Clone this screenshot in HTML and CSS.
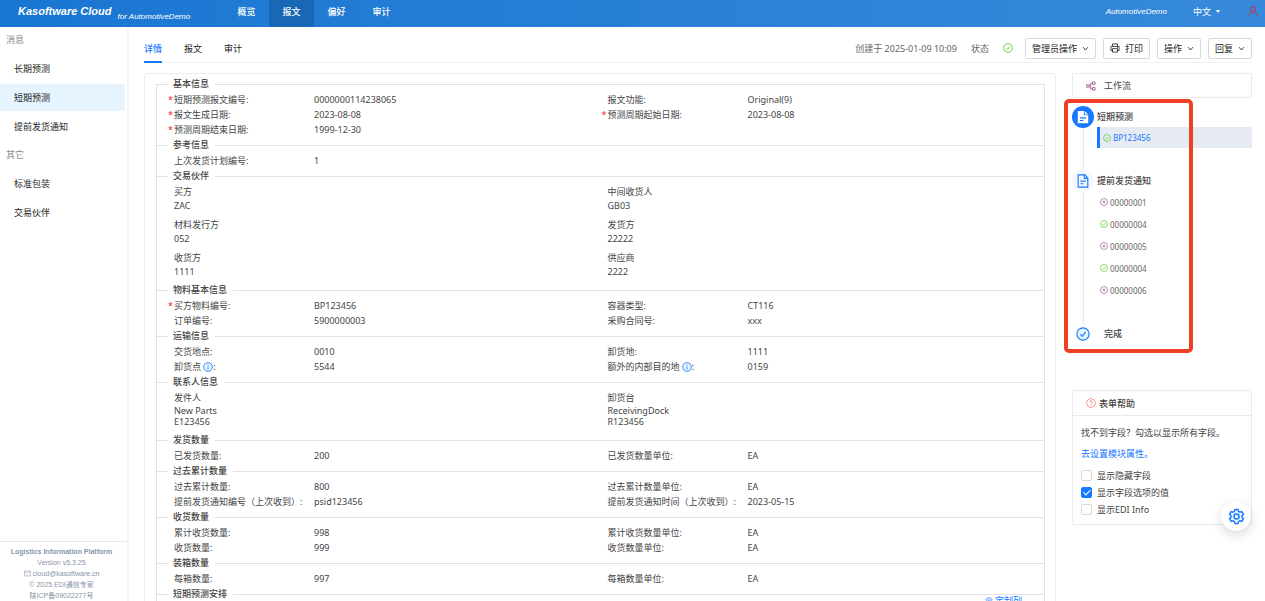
FILE: index.html
```html
<!DOCTYPE html>
<html lang="zh-CN">
<head>
    <meta charset="UTF-8">
    <meta name="viewport" content="width=device-width, initial-scale=1.0">
    <title>Kasoftware Cloud</title>
    <link rel="stylesheet" href="styles.css">
</head>
<body>
    <!-- Icons -->
    <svg class="sprite" aria-hidden="true">
        <symbol id="i-check" viewBox="0 0 16 16"><circle cx="8" cy="8" r="7"/><path d="M5 8.2l2.2 2.4L11 5.6"/></symbol>
        <symbol id="i-plus" viewBox="0 0 16 16"><circle cx="8" cy="8" r="7"/><path d="M5 8h6M8 5v6"/></symbol>
        <symbol id="i-info" viewBox="0 0 16 16"><circle cx="8" cy="8" r="7"/><path d="M8 7v5M8 4v1.5"/></symbol>
        <symbol id="i-question" viewBox="0 0 16 16"><circle cx="8" cy="8" r="7"/><path d="M5.800 6.500c0-3 4.400-3 4.400 0C10.200 8 8 8 8 9.800M8 11.200v1.200"/></symbol>
        <symbol id="i-down" viewBox="0 0 16 16"><path d="M2.500 5L8 11.500 13.500 5"/></symbol>
        <symbol id="i-print" viewBox="0 0 16 16"><path d="M4 5.500V1.500h8v4M4 12H1.500V5.500h13V12H12M4 9h8v5.500H4zM11.500 7.300h1.200"/></symbol>
        <symbol id="i-user" viewBox="0 0 16 16"><circle cx="8" cy="5" r="4"/><path d="M1.500 15.500C2 7 14 7 14.500 15.500"/></symbol>
        <symbol id="i-mail" viewBox="0 0 16 16"><path d="M1 2.500h14v11H1zM1.500 3L8 8.500 14.500 3"/></symbol>
        <symbol id="i-share" viewBox="0 0 16 16"><path d="M1 6h4v4H1zM10.500 1.500h4v4h-4zM10.500 10.500h4v4h-4zM5 8h2.500M10.500 3.500h-3v9h3"/></symbol>
        <symbol id="i-file" viewBox="0 0 16 16"><path d="M2.500 1h7.500l3.500 3.500V15h-11zM9.500 1v4h4M5 8.200h6M5 11.200h3.500"/></symbol>
        <symbol id="i-file-fill" viewBox="0 0 16 16"><path class="solid" d="M2 1h7v5h5v9H2z"/><path class="solid" d="M10 1l4 4h-4z"/><path class="cut" d="M4.500 9h7M4.500 12h4"/></symbol>
        <symbol id="i-gear" viewBox="-12 -12 24 24"><path d="M-2.200-10h4.400l.7 2.700 1.970 1.140 2.690-.75 2.200 3.820-1.990 1.950v2.280l1.990 1.950-2.200 3.820-2.690-.75L2.900 7.300 2.200 10h-4.400l-.7-2.700-1.970-1.140-2.690.75-2.200-3.820 1.990-1.950v-2.280l-1.990-1.950 2.200-3.820 2.690.75L-2.900-7.300z"/><circle r="3.600"/></symbol>
    </svg>

    <header class="topbar">
        <div class="brand">Kasoftware Cloud <small>for AutomotiveDemo</small></div>
        <nav class="topnav">
            <a href="#">概览</a>
            <a href="#" class="active">报文</a>
            <a href="#">偏好</a>
            <a href="#">审计</a>
        </nav>
        <div class="account">
            <span class="tenant">AutomotiveDemo</span>
            <button class="lang">中文 <span class="caret"></span></button>
            <button class="user" aria-label="用户"><svg class="icon"><use href="#i-user"/></svg></button>
        </div>
    </header>

    <div class="layout">
        <aside class="sidebar">
            <nav class="menu">
                <div class="menu-title">消息</div>
                <a href="#">长期预测</a>
                <a href="#" class="active">短期预测</a>
                <a href="#">提前发货通知</a>
                <div class="menu-title">其它</div>
                <a href="#">标准包装</a>
                <a href="#">交易伙伴</a>
            </nav>
            <footer class="about">
                <strong>Logistics Information Platform</strong>
                <div>Version v5.3.25</div>
                <div><svg class="icon"><use href="#i-mail"/></svg> cloud@kasoftware.cn</div>
                <div>© 2025 EDI通信专家</div>
                <div>陕ICP备09022277号</div>
            </footer>
        </aside>

        <main class="main">
            <div class="toolbar">
                <nav class="tabs">
                    <a href="#" class="active">详情</a>
                    <a href="#">报文</a>
                    <a href="#">审计</a>
                </nav>
                <div class="meta">
                    <span>创建于 2025-01-09 10:09</span>
                    <span>状态</span>
                    <svg class="icon ok"><use href="#i-check"/></svg>
                </div>
                <div class="actions">
                    <button>管理员操作 <svg class="icon small"><use href="#i-down"/></svg></button>
                    <button><svg class="icon"><use href="#i-print"/></svg> 打印</button>
                    <button>操作 <svg class="icon small"><use href="#i-down"/></svg></button>
                    <button>回复 <svg class="icon small"><use href="#i-down"/></svg></button>
                </div>
            </div>

            <div class="content">
                <div class="detail">
                    <fieldset>
                        <legend>基本信息</legend>
                        <div class="fields">
                            <div class="field required"><span class="label">短期预测报文编号:</span><span>0000000114238065</span></div>
                            <div class="field"><span class="label">报文功能:</span><span>Original(9)</span></div>
                            <div class="field required"><span class="label">报文生成日期:</span><span>2023-08-08</span></div>
                            <div class="field required"><span class="label">预测周期起始日期:</span><span>2023-08-08</span></div>
                            <div class="field required"><span class="label">预测周期结束日期:</span><span>1999-12-30</span></div>
                        </div>
                    </fieldset>
                    <fieldset>
                        <legend>参考信息</legend>
                        <div class="fields">
                            <div class="field"><span class="label">上次发货计划编号:</span><span>1</span></div>
                        </div>
                    </fieldset>
                    <fieldset>
                        <legend>交易伙伴</legend>
                        <div class="fields partners">
                            <div class="party"><span>买方</span><span>ZAC</span></div>
                            <div class="party"><span>中间收货人</span><span>GB03</span></div>
                            <div class="party"><span>材料发行方</span><span>052</span></div>
                            <div class="party"><span>发货方</span><span>22222</span></div>
                            <div class="party"><span>收货方</span><span>1111</span></div>
                            <div class="party"><span>供应商</span><span>2222</span></div>
                        </div>
                    </fieldset>
                    <fieldset>
                        <legend>物料基本信息</legend>
                        <div class="fields">
                            <div class="field required"><span class="label">买方物料编号:</span><span>BP123456</span></div>
                            <div class="field"><span class="label">容器类型:</span><span>CT116</span></div>
                            <div class="field"><span class="label">订单编号:</span><span>5900000003</span></div>
                            <div class="field"><span class="label">采购合同号:</span><span>xxx</span></div>
                        </div>
                    </fieldset>
                    <fieldset>
                        <legend>运输信息</legend>
                        <div class="fields">
                            <div class="field"><span class="label">交货地点:</span><span>0010</span></div>
                            <div class="field"><span class="label">卸货地:</span><span>1111</span></div>
                            <div class="field"><span class="label">卸货点 <svg class="icon info"><use href="#i-info"/></svg>:</span><span>5544</span></div>
                            <div class="field"><span class="label">额外的内部目的地 <svg class="icon info"><use href="#i-info"/></svg>:</span><span>0159</span></div>
                        </div>
                    </fieldset>
                    <fieldset>
                        <legend>联系人信息</legend>
                        <div class="fields contacts">
                            <div class="party"><span>发件人</span><span>New Parts</span><span>E123456</span></div>
                            <div class="party"><span>卸货台</span><span>ReceivingDock</span><span>R123456</span></div>
                        </div>
                    </fieldset>
                    <fieldset>
                        <legend>发货数量</legend>
                        <div class="fields">
                            <div class="field"><span class="label">已发货数量:</span><span>200</span></div>
                            <div class="field"><span class="label">已发货数量单位:</span><span>EA</span></div>
                        </div>
                    </fieldset>
                    <fieldset>
                        <legend>过去累计数量</legend>
                        <div class="fields">
                            <div class="field"><span class="label">过去累计数量:</span><span>800</span></div>
                            <div class="field"><span class="label">过去累计数量单位:</span><span>EA</span></div>
                            <div class="field"><span class="label">提前发货通知编号（上次收到）:</span><span>psid123456</span></div>
                            <div class="field"><span class="label">提前发货通知时间（上次收到）:</span><span>2023-05-15</span></div>
                        </div>
                    </fieldset>
                    <fieldset>
                        <legend>收货数量</legend>
                        <div class="fields">
                            <div class="field"><span class="label">累计收货数量:</span><span>998</span></div>
                            <div class="field"><span class="label">累计收货数量单位:</span><span>EA</span></div>
                            <div class="field"><span class="label">收货数量:</span><span>999</span></div>
                            <div class="field"><span class="label">收货数量单位:</span><span>EA</span></div>
                        </div>
                    </fieldset>
                    <fieldset>
                        <legend>装箱数量</legend>
                        <div class="fields">
                            <div class="field"><span class="label">每箱数量:</span><span>997</span></div>
                            <div class="field"><span class="label">每箱数量单位:</span><span>EA</span></div>
                        </div>
                    </fieldset>
                    <fieldset>
                        <legend>短期预测安排</legend>
                        <div class="table-tools">
                            <button><svg class="icon"><use href="#i-gear"/></svg> 定制列</button>
                        </div>
                    </fieldset>
                </div>

                <aside class="side">
                    <section class="workflow">
                        <h2><svg class="icon share"><use href="#i-share"/></svg> 工作流</h2>
                        <ol class="steps">
                            <li>
                                <span class="node current"><svg class="icon"><use href="#i-file-fill"/></svg></span>
                                <h3>短期预测</h3>
                                <a href="#" class="doc selected"><svg class="icon ok"><use href="#i-check"/></svg>BP123456</a>
                            </li>
                            <li>
                                <span class="node"><svg class="icon"><use href="#i-file"/></svg></span>
                                <h3>提前发货通知</h3>
                                <a href="#" class="doc"><svg class="icon new"><use href="#i-plus"/></svg>00000001</a>
                                <a href="#" class="doc"><svg class="icon ok"><use href="#i-check"/></svg>00000004</a>
                                <a href="#" class="doc"><svg class="icon new"><use href="#i-plus"/></svg>00000005</a>
                                <a href="#" class="doc"><svg class="icon ok"><use href="#i-check"/></svg>00000004</a>
                                <a href="#" class="doc"><svg class="icon new"><use href="#i-plus"/></svg>00000006</a>
                            </li>
                            <li class="done">
                                <span class="node"><svg class="icon"><use href="#i-check"/></svg></span>
                                <h3>完成</h3>
                            </li>
                        </ol>
                        <div class="highlight"></div>
                    </section>

                    <section class="help">
                        <h2><svg class="icon"><use href="#i-question"/></svg> 表单帮助</h2>
                        <div class="help-body">
                            <p>找不到字段？勾选以显示所有字段。</p>
                            <p><a href="#">去设置模块属性。</a></p>
                            <label><input type="checkbox"> 显示隐藏字段</label>
                            <label><input type="checkbox" checked> 显示字段选项的值</label>
                            <label><input type="checkbox"> 显示EDI Info</label>
                        </div>
                        <button class="float" aria-label="设置"><svg class="icon"><use href="#i-gear"/></svg></button>
                    </section>
                </aside>
            </div>
        </main>
    </div>
</body>
</html>
```

FILE: styles.css
```css
* {
    box-sizing: border-box;
}
body {
    margin: 0;
    height: 100vh;
    display: flex;
    flex-direction: column;
    overflow: hidden;
    font-family: "Noto Sans", "Noto Sans CJK SC", sans-serif;
    font-size: 9px;
    line-height: 15px;
    color: #444;
    background: #fff;
}
a {
    color: inherit;
    text-decoration: none;
}
button {
    padding: 0;
    border: none;
    background: none;
    font: inherit;
    color: inherit;
    cursor: pointer;
}
h2, h3, p, ol {
    margin: 0;
    padding: 0;
    font-size: 9px;
    font-weight: normal;
}
.sprite {
    display: none;
}
.icon {
    width: 10px;
    height: 10px;
    flex: none;
    fill: none;
    stroke: currentColor;
    stroke-width: 1.3;
}
.icon.small {
    width: 7px;
    height: 7px;
    stroke-width: 2;
}
.ok {
    color: #52c41a;
}
.new {
    color: #9e4a94;
}

/* Top bar */
.topbar {
    display: flex;
    height: 27px;
    flex: none;
    padding-right: 7px;
    line-height: 23px;
    color: #fff;
    background: linear-gradient(90deg, #1976d2, #378ada);
}
.brand {
    width: 224px;
    padding-left: 18px;
    font: italic bold 11px/22px "Liberation Sans", Arial, sans-serif;
    white-space: nowrap;
}
.brand small {
    margin-left: 3px;
    font-size: 8px;
    font-weight: normal;
    vertical-align: -4px;
}
.topnav {
    display: flex;
    font-weight: 500;
}
.topnav a {
    width: 45px;
    text-align: center;
}
.topnav a.active {
    background: #1868b5;
}
.account {
    display: flex;
    margin-left: auto;
}
.tenant {
    font: italic 8px/23px "Liberation Sans", Arial, sans-serif;
}
.lang {
    display: flex;
    align-items: center;
    gap: 5px;
    height: 23px;
    margin: 0 28px 0 26px;
}
.caret {
    border: 2px solid transparent;
    border-top: 3px solid #fff;
    border-bottom: 0;
}
.user {
    display: flex;
    align-items: center;
    height: 22px;
    color: #e02020;
}

/* Left menu */
.layout {
    display: flex;
    flex: 1;
    min-height: 0;
}
.sidebar {
    display: flex;
    flex-direction: column;
    width: 129px;
    flex: none;
    border-right: 2px solid #f3f4f7;
}
.menu a {
    display: block;
    margin: 0 2px 2px 0;
    padding-left: 14px;
    line-height: 27px;
    color: #222;
}
.menu a.active {
    background: #e6f4ff;
    border-radius: 0 2px 2px 0;
}
.menu-title {
    margin-bottom: 2px;
    padding-left: 6px;
    line-height: 26px;
    color: #8c8c8c;
}
.about {
    margin-top: auto;
    padding: 4px 4px 0 0;
    border-top: 1px solid #e8e8e8;
    font-family: "Liberation Sans", "Noto Sans CJK SC", sans-serif;
    font-size: 7px;
    line-height: 11px;
    text-align: center;
    color: #8796a8;
}
.about strong {
    display: block;
}
.about .icon {
    width: 7px;
    height: 7px;
    vertical-align: -1px;
}

/* Tabs and actions */
.main {
    flex: 1;
    min-width: 0;
    padding: 0 13px 0 15px;
}
.toolbar {
    display: flex;
    align-items: center;
    height: 36px;
    padding-top: 7px;
    border-bottom: 1px solid #f0f0f0;
}
.tabs {
    display: flex;
    gap: 22px;
    align-self: stretch;
    margin-bottom: -1px;
    line-height: 30px;
    color: #222;
}
.tabs a {
    border-bottom: 2px solid transparent;
}
.tabs a.active {
    color: #1677ff;
    border-color: #1677ff;
    font-weight: 500;
}
.meta {
    display: flex;
    align-items: center;
    gap: 14px;
    margin-left: auto;
    margin-right: 12px;
    color: #666;
}
.actions {
    display: flex;
    gap: 7px;
}
.actions button {
    display: flex;
    align-items: center;
    gap: 5px;
    height: 21px;
    padding: 0 6px;
    border: 1px solid #d9d9d9;
    border-radius: 2px;
    color: #222;
}
.content {
    display: flex;
    gap: 16px;
    padding-top: 10px;
}

/* Document detail */
.detail {
    flex: 1;
    min-width: 0;
    padding: 2px 10px 30px 11px;
    border: 1px solid #ebedf0;
    border-radius: 3px;
}
fieldset {
    min-width: 0;
    margin: 0 0 -8px;
    padding: 0 9px 8px 11px;
    border: 1px solid #e2e2e2;
    border-bottom: 0;
}
legend {
    padding: 0 6px 0 5px;
    line-height: 16px;
    font-weight: 500;
}
.fields {
    display: grid;
    grid-template-columns: 1fr 1fr;
}
.field {
    display: flex;
    white-space: nowrap;
}
.label {
    width: 146px;
    padding-left: 6px;
}
.required .label {
    padding-left: 0;
}
.required .label::before {
    content: "*";
    display: inline-block;
    width: 6px;
    color: #f5222d;
}
.info {
    color: #1677ff;
    vertical-align: -2px;
}
.info use {
    fill: #e6f4ff;
}
.party {
    display: flex;
    flex-direction: column;
    padding-left: 6px;
}
.partners {
    row-gap: 5px;
    padding-bottom: 4px;
}
.partners .party span + span {
    line-height: 13px;
}
.contacts {
    padding-bottom: 5px;
}
.contacts .party span + span {
    line-height: 11px;
}
.table-tools {
    display: flex;
    justify-content: flex-end;
    margin-top: -9px;
    padding-right: 13px;
}
.table-tools button {
    display: flex;
    align-items: center;
    gap: 2px;
    color: #1677ff;
}
.table-tools .icon {
    width: 8px;
    height: 8px;
    stroke-width: 2;
}

/* Workflow */
.side {
    width: 180px;
    flex: none;
}
.workflow {
    position: relative;
}
.side h2 {
    display: flex;
    align-items: center;
    height: 25px;
    padding-left: 13px;
}
.workflow h2 {
    gap: 8px;
    border: 1px solid #ebebeb;
}
.share {
    color: #9e4a94;
}
.steps {
    list-style: none;
    padding-top: 9px;
}
.steps li {
    display: grid;
    grid-template-columns: 22px 1fr;
    column-gap: 3px;
    align-content: start;
    padding-bottom: 23px;
    background: linear-gradient(#e6e8ee, #e6e8ee) 11px 0 / 1px 100% no-repeat;
}
.steps h3 {
    line-height: 20px;
    font-weight: 500;
}
.node {
    display: flex;
    align-items: center;
    justify-content: center;
    width: 22px;
    height: 22px;
    margin: -1px 0;
    border-radius: 50%;
    color: #1677ff;
    background: #f3f8ff;
}
.node .icon {
    width: 14px;
    height: 14px;
}
.node.current {
    color: #fff;
    background: #1677ff;
}
.solid {
    fill: currentColor;
    stroke: none;
}
.cut {
    stroke: #1677ff;
}
.doc {
    display: flex;
    align-items: center;
    gap: 2px;
    grid-column: 2;
    height: 22px;
    padding-left: 3px;
    font-size: 8px;
    color: #666;
}
.doc .icon {
    width: 8px;
    height: 8px;
}
.doc.selected {
    height: 21px;
    border-left: 3px solid #1677ff;
    border-radius: 0 2px 2px 0;
    color: #1677ff;
    background: #e6ebf3;
}
.steps .done {
    column-gap: 10px;
    padding-bottom: 0;
    background: none;
}
.done .node {
    background: none;
}
.done .node use {
    fill: #e6f4ff;
}
.highlight {
    position: absolute;
    top: 26px;
    left: -8px;
    width: 129px;
    height: 254px;
    border: 4px solid #ee4025;
    border-radius: 5px;
}

/* Form help */
.help {
    position: relative;
    margin-top: 46px;
    border: 1px solid #ebebeb;
    border-radius: 3px;
}
.help h2 {
    gap: 3px;
    border-bottom: 1px solid #ebebeb;
    font-weight: 500;
}
.help h2 .icon {
    color: #ff7875;
}
.help-body {
    padding: 9px 8px 6px;
}
.help-body p {
    margin-bottom: 6px;
}
.help-body a {
    color: #1677ff;
}
.help-body label {
    display: flex;
    align-items: center;
    gap: 5px;
    line-height: 17px;
}
.help-body input {
    appearance: none;
    display: flex;
    align-items: center;
    justify-content: center;
    width: 11px;
    height: 11px;
    margin: 0;
    border: 1px solid #d9d9d9;
    border-radius: 2px;
}
.help-body input:checked {
    border-color: #1677ff;
    background: #1677ff;
}
.help-body input:checked::before {
    content: "";
    width: 3px;
    height: 6px;
    margin-bottom: 2px;
    border: solid #fff;
    border-width: 0 1px 1px 0;
    transform: rotate(45deg);
}
.float {
    position: absolute;
    right: 0;
    bottom: -7px;
    display: flex;
    align-items: center;
    justify-content: center;
    width: 30px;
    height: 30px;
    border-radius: 50%;
    color: #1677ff;
    background: #fff;
    box-shadow: 0 4px 12px rgba(0, 0, 0, 0.15);
}
.float .icon {
    width: 17px;
    height: 17px;
    stroke-width: 2;
}
.float use {
    fill: #e6f4ff;
}
```
